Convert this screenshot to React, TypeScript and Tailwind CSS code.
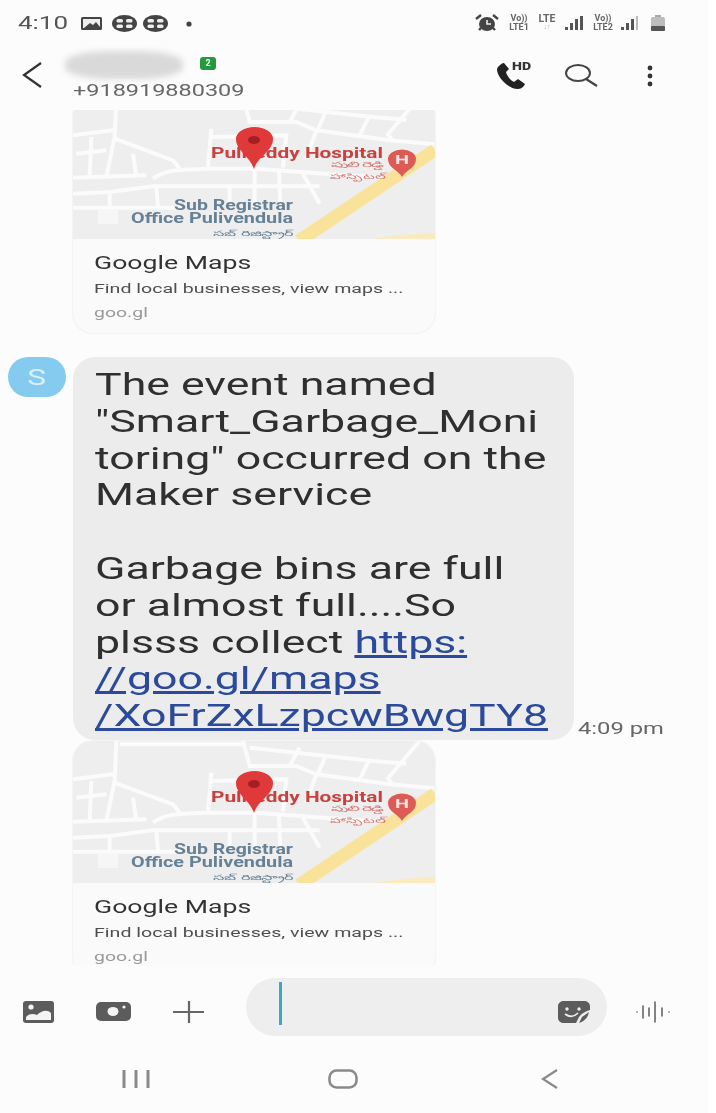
import React from "react";

const Wide = ({ children, className = "" }: { children: React.ReactNode; className?: string }) => (
  <span className={`inline-block origin-left scale-x-[1.44] whitespace-nowrap ${className}`}>{children}</span>
);

const MapThumb = () => (
  <svg viewBox="0 -13 362 142" className="block w-full h-[142px]" fontFamily="Roboto, sans-serif">
    <rect y="-13" width="362" height="142" fill="#eeeeee" />
    <g transform="translate(0 -13) scale(0.3333)" stroke="#fbfbfb" strokeWidth="12" fill="none">
      <path d="M140 10 H510 M130 0 L125 120 L100 240 M0 115 L120 100 M10 170 L100 160 M55 120 L50 240 M125 125 L300 190 L320 215" />
      <path d="M0 242 L220 235 M180 170 L190 240 M0 290 L110 285 L240 268 H740 M0 332 H300 L330 330" />
      <path d="M240 245 C270 222 300 218 400 215 H545 C650 222 750 230 960 245" />
      <path d="M545 215 V330 M618 225 L622 322 M690 230 L740 320 M470 268 V322 M110 285 V330 M250 268 L255 330" />
      <path d="M510 0 L530 75 H670 L730 100 L950 130 L1085 142 M730 100 L700 185 M415 95 L405 212 M415 120 L640 115 L630 212" />
      <path d="M530 20 L900 60 M680 20 L650 75 M760 40 L735 98 M890 55 L860 115 M1040 0 L945 112 L960 132 M900 60 L1000 68" />
    </g>
    <rect x="25" y="99" width="20" height="15" fill="#f6f6f6" />
    <path d="M226 131 L362 40" stroke="#f9e39a" strokeWidth="13" fill="none" />
    <path d="M300 129 Q330 124 362 123 V129 Z" fill="#f9ebbd" />
    <text x="138" y="48" fontSize="14" fontWeight="700" fill="#c8413f" textLength="172" lengthAdjust="spacingAndGlyphs">Pulireddy Hospital</text>
    <path d="M181 59 C177 46 163 41 163 29 A18.5 12 0 0 1 200 29 C200 41 185 46 181 59 Z" fill="#e0393a" />
    <ellipse cx="181" cy="30" rx="6" ry="4" fill="#a51f22" />
    <path d="M329 67 C325 60 315 58 315 49 A14 9.5 0 0 1 343 49 C343 58 333 60 329 67 Z" fill="#dd5a55" />
    <text x="329" y="54" fontSize="13" fontWeight="700" fill="#fbe6e4" textAnchor="middle" textLength="14" lengthAdjust="spacingAndGlyphs">H</text>
    <text x="258" y="57" fontSize="7.5" fill="#c8413f" opacity="0.7" textLength="54" lengthAdjust="spacingAndGlyphs" fontFamily="'Noto Sans', 'DejaVu Sans', sans-serif">పులిరెడ్డి</text>
    <text x="257" y="69" fontSize="7.5" fill="#c8413f" opacity="0.7" textLength="55" lengthAdjust="spacingAndGlyphs" fontFamily="'Noto Sans', 'DejaVu Sans', sans-serif">హాస్పిటల్</text>
    <text x="220" y="100" fontSize="14" fontWeight="700" fill="#668196" textAnchor="end" textLength="119" lengthAdjust="spacingAndGlyphs">Sub Registrar</text>
    <text x="220" y="113" fontSize="14" fontWeight="700" fill="#668196" textAnchor="end" textLength="162" lengthAdjust="spacingAndGlyphs">Office Pulivendula</text>
    <text x="220" y="126" fontSize="7.5" fill="#668196" textAnchor="end" textLength="80" lengthAdjust="spacingAndGlyphs" fontFamily="'Noto Sans', 'DejaVu Sans', sans-serif">సబ్ రిజిస్ట్రార్</text>
  </svg>
);

const LinkCard = () => (
  <div className="ml-[73px] w-[362px] h-[236px] rounded-[20px] bg-[#fafafa] shadow-[0_0_2px_#dddddd] overflow-hidden shrink-0">
    <MapThumb />
    <div className="pl-[21px] pt-[12px] font-['Roboto',sans-serif]">
      <div className="h-[25px] text-[18.5px] leading-[25px] text-[#333333]"><Wide>Google Maps</Wide></div>
      <div className="mt-[1px] h-[22px] text-[13.6px] leading-[22px] text-[#4f4f4f]"><Wide>Find local businesses, view maps ...</Wide></div>
      <div className="mt-[2px] h-[22px] text-[13.5px] leading-[22px] text-[#9a9a9a]"><Wide>goo.gl</Wide></div>
    </div>
  </div>
);

const StatusBar = () => (
  <div className="h-[45px] pl-[18px] pr-[42px] flex items-center justify-between font-['Roboto',sans-serif] shrink-0">
    <div className="flex items-center">
      <div className="w-[62px] text-[18px] text-[#555555]"><Wide>4:10</Wide></div>
      <svg width="115" height="18" viewBox="0 0 115 18">
        <rect x="1" y="3" width="21" height="13" rx="1.5" fill="#444" />
        <rect x="3" y="5" width="17" height="9" fill="#eee" />
        <path d="M4 14 L10 9 L13 11 L16 8 L20 13 V14 Z" fill="#444" />
        <g fill="#444">
          <ellipse cx="44.5" cy="9.5" rx="12.5" ry="8.5" />
          <ellipse cx="75.5" cy="9.5" rx="12.5" ry="8.5" />
        </g>
        <g fill="#eee">
          <rect x="36.5" y="5" width="6.5" height="3.5" rx="1.6" /><rect x="46" y="5" width="6.5" height="3.5" rx="1.6" />
          <rect x="36.5" y="10.5" width="6.5" height="3.5" rx="1.6" /><rect x="46" y="10.5" width="6.5" height="3.5" rx="1.6" />
          <rect x="67.5" y="5" width="6.5" height="3.5" rx="1.6" /><rect x="77" y="5" width="6.5" height="3.5" rx="1.6" />
          <rect x="67.5" y="10.5" width="6.5" height="3.5" rx="1.6" /><rect x="77" y="10.5" width="6.5" height="3.5" rx="1.6" />
        </g>
        <circle cx="109" cy="10" r="2.6" fill="#444" />
      </svg>
    </div>
    <div className="flex items-center text-[#666666]">
      <svg width="24" height="18" viewBox="0 0 24 18">
        <ellipse cx="12" cy="10" rx="8" ry="7" fill="#444" />
        <path d="M1 5 L6 1 M23 5 L18 1 M4 16 L6 14 M20 16 L18 14" stroke="#444" strokeWidth="2.4" />
        <path d="M12 6 V10 H16" stroke="#eee" strokeWidth="1.6" fill="none" />
      </svg>
      <div className="ml-[6px] w-[28px] text-[9px] leading-[9px] font-bold text-center">Vo))<br />LTE1</div>
      <div className="ml-[3px] w-[22px] text-[10.5px] leading-[10px] font-bold text-center">LTE<br /><span className="text-[#aaaaaa] text-[7px] block leading-[7px]">↓↑</span></div>
      <svg width="20" height="16" viewBox="0 0 20 16" className="ml-[7px]" fill="#555">
        <rect x="0" y="12" width="3" height="3" /><rect x="5" y="8" width="3" height="7" /><rect x="10" y="4" width="3" height="11" /><rect x="15" y="1" width="3" height="14" />
      </svg>
      <div className="ml-[5px] w-[26px] text-[9px] leading-[9px] font-bold text-center">Vo))<br />LTE2</div>
      <svg width="20" height="16" viewBox="0 0 20 16" className="ml-[5px]">
        <rect x="0" y="12" width="3" height="3" fill="#555" /><rect x="5" y="8" width="3" height="7" fill="#555" /><rect x="10" y="4" width="3" height="11" fill="#555" /><rect x="15" y="1" width="2" height="14" fill="#bbb" />
      </svg>
      <svg width="16" height="18" viewBox="0 0 16 18" className="ml-[9px]">
        <rect x="5" y="1" width="6" height="2" fill="#aaa" />
        <rect x="1" y="3" width="14" height="14" rx="1.5" fill="#bdbdbd" />
        <rect x="1" y="12" width="14" height="5" rx="1" fill="#555" />
      </svg>
    </div>
  </div>
);

const Header = () => (
  <div className="h-[65px] relative flex shrink-0 font-['Roboto',sans-serif]">
    <svg width="24" height="28" viewBox="0 0 24 28" className="ml-[21px] mt-[16px]">
      <path d="M20 2 L3 14 L20 26" stroke="#333" strokeWidth="2.2" fill="none" />
    </svg>
    <div className="ml-[28px] w-[240px]">
      <div className="h-[36px] flex items-start">
        <div className="ml-[-8px] mt-[6px] w-[118px] h-[28px] rounded-[40%] bg-[#d9d9d9] blur-[3px]" />
        <div className="ml-[17px] mt-[12px] w-[16px] h-[13px] rounded-[3px] bg-[#239a3e] text-white text-[9px] leading-[13px] font-bold text-center">2</div>
      </div>
      <div className="text-[16.3px] leading-[20px] text-[#666666]"><Wide>+918919880309</Wide></div>
    </div>
    <div className="ml-auto mr-[54px] mt-[16px] flex items-start">
      <svg width="36" height="30" viewBox="0 0 36 30">
        <path d="M3 6 C1 8 2 12 6 18 C11 24 17 28 23 28 C27 28 29 25 30 23 L23 18 L19 21 C15 19 12 15 11 11 L14 8 L9 2 C7 2 5 4 3 6 Z" fill="#222" />
        <text x="17" y="9" fontSize="10.5" fontWeight="900" fill="#333" textLength="19" lengthAdjust="spacingAndGlyphs">HD</text>
      </svg>
      <svg width="34" height="26" viewBox="0 0 34 26" className="ml-[34px] mt-[3px]">
        <ellipse cx="13" cy="9" rx="12" ry="8" stroke="#444" strokeWidth="2" fill="none" />
        <path d="M21 15 L32 22" stroke="#444" strokeWidth="2.2" />
      </svg>
      <svg width="8" height="24" viewBox="0 0 8 24" className="ml-[47px] mt-[3px]" fill="#333">
        <circle cx="4" cy="4" r="2.4" /><circle cx="4" cy="12" r="2.4" /><circle cx="4" cy="20" r="2.4" />
      </svg>
    </div>
  </div>
);

const Line = ({ children }: { children?: React.ReactNode }) => (
  <div className="h-[36.8px]"><Wide>{children}</Wide></div>
);

const Message = () => (
  <div className="mt-[24px] flex items-end relative shrink-0">
    <div className="absolute left-[8px] top-0 w-[58px] h-[40px] rounded-full bg-[#84cbef] flex items-center justify-center text-[#d9f1fb] text-[22px]"><Wide className="!origin-center">S</Wide></div>
    <div className="ml-[73px] w-[501px] h-[383px] rounded-[22px] bg-[#ececec] pl-[22px] pt-[9px] text-[31px] leading-[37px] text-[#2f2f2f]">
      <Line>The event named</Line>
      <Line>"Smart_Garbage_Moni</Line>
      <Line>toring" occurred on the</Line>
      <Line>Maker service</Line>
      <Line />
      <Line>Garbage bins are full</Line>
      <Line>or almost full....So</Line>
      <Line>plsss collect <a className="underline text-[#2b4a9b]">https:</a></Line>
      <Line><a className="underline text-[#2b4a9b]">//goo.gl/maps</a></Line>
      <Line><a className="underline text-[#2b4a9b]">/XoFrZxLzpcwBwgTY8</a></Line>
    </div>
    <div className="ml-[4px] pb-[1px] text-[16.5px] leading-[20px] text-[#666666]"><Wide>4:09 pm</Wide></div>
  </div>
);

const Composer = () => (
  <div className="mt-[13px] h-[58px] pl-[23px] flex items-center shrink-0">
    <svg width="31" height="22" viewBox="0 0 31 22" fill="#5c5c5c" className="mt-[10px]">
      <rect x="0" y="0" width="31" height="22" rx="3" />
      <circle cx="8" cy="6" r="2.6" fill="#f4f4f4" />
      <path d="M3 19 V16 C7 12 11 13 14 14 C18 10 24 8 28 12 V19 Z" fill="#f4f4f4" />
    </svg>
    <svg width="36" height="20" viewBox="0 0 36 20" className="ml-[42px] mt-[10px]" fill="#5c5c5c">
      <rect x="0" y="0" width="35" height="19" rx="5" />
      <ellipse cx="17" cy="9.5" rx="5.5" ry="4.5" fill="#f4f4f4" />
      <circle cx="28" cy="5" r="1.6" fill="#f4f4f4" />
    </svg>
    <svg width="32" height="24" viewBox="0 0 32 24" className="ml-[41px] mt-[10px]">
      <path d="M0 12 H31 M16 1 V23" stroke="#666" strokeWidth="2.2" />
    </svg>
    <div className="ml-[41px] w-[361px] h-[58px] rounded-full bg-[#eeeeee] flex items-center justify-between pl-[33px] pr-[17px]">
      <div className="w-[3px] h-[43px] bg-[#3fa7c4] mt-[-8px]" />
      <svg width="32" height="22" viewBox="0 0 32 22" className="mt-[10px]">
        <path d="M6 0 H26 C29 0 32 2 32 5 V9 C28 10 24 12 21 16 L18 22 H6 C3 22 0 20 0 17 V5 C0 2 3 0 6 0 Z" fill="#5c5c5c" />
        <path d="M24 16 L31 11 C30 16 27 20 21 22 Z" fill="#5c5c5c" />
        <circle cx="9" cy="8" r="1.7" fill="#eee" /><circle cx="21" cy="8" r="1.7" fill="#eee" />
        <path d="M7 13 C11 16 16 16 20 12" stroke="#eee" strokeWidth="1.6" fill="none" />
      </svg>
    </div>
    <svg width="34" height="22" viewBox="0 0 34 22" className="ml-[29px] mt-[10px]" stroke="#666" strokeWidth="1.6" strokeLinecap="round">
      <path d="M1 11 V11.1 M7 5 V17 M13 7 V15 M19 1 V21 M26 7 V15 M33 11 V11.1" />
    </svg>
  </div>
);

const NavBar = () => (
  <div className="h-[77px] flex items-start shrink-0 pt-[33px]">
    <svg width="28" height="20" viewBox="0 0 28 20" className="ml-[122px]" stroke="#8a8a8a" strokeWidth="3">
      <path d="M2 1 V19 M14 1 V19 M26 1 V19" />
    </svg>
    <svg width="30" height="20" viewBox="0 0 30 20" className="ml-[178px]">
      <rect x="1.5" y="1.5" width="27" height="17" rx="7" stroke="#8a8a8a" strokeWidth="2.6" fill="none" />
    </svg>
    <svg width="18" height="20" viewBox="0 0 18 20" className="ml-[183px]">
      <path d="M16 1 L2 10 L16 19" stroke="#8a8a8a" strokeWidth="2.2" fill="none" />
    </svg>
  </div>
);

export default function App() {
  return (
    <div className="w-[716px] h-[1113px] bg-white overflow-hidden blur-[0.4px]">
      <div className="w-[708px] h-[1113px] bg-[#fcfcfc] flex flex-col font-['Roboto',sans-serif]">
        <StatusBar />
        <Header />
        <div className="h-[855px] flex flex-col overflow-hidden shrink-0">
          <div className="mt-[-13px] flex flex-col shrink-0">
            <LinkCard />
            <Message />
            <div className="mt-[1px]"><LinkCard /></div>
          </div>
        </div>
        <Composer />
        <NavBar />
      </div>
    </div>
  );
}
